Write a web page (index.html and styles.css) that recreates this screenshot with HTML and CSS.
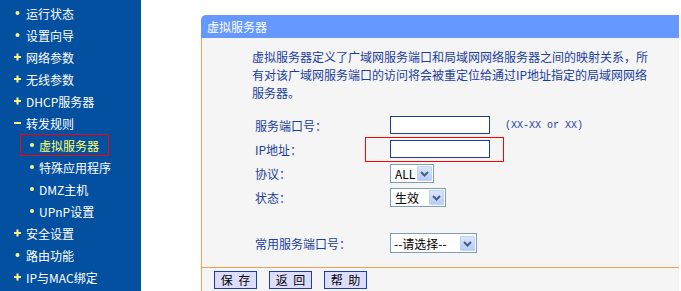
FILE: index.html
```html
<html>
<head>
    <title>虚拟服务器</title>
    <link rel="stylesheet" href="styles.css">
</head>
<body>
<div class="page">
    <aside class="side-menu">
        <ul class="menu-list">
            <li class="menu-item"><svg class="mark" width="8" height="8"><circle cx="3.5" cy="4" r="2" fill="#ffff80"/></svg>运行状态</li>
            <li class="menu-item"><svg class="mark" width="8" height="8"><circle cx="3.5" cy="4" r="2" fill="#ffff80"/></svg>设置向导</li>
            <li class="menu-item"><svg class="mark" width="8" height="8"><path d="M0 3h7v2H0zM2.5 0.5h2v7h-2z" fill="#ffff80"/></svg>网络参数</li>
            <li class="menu-item"><svg class="mark" width="8" height="8"><path d="M0 3h7v2H0zM2.5 0.5h2v7h-2z" fill="#ffff80"/></svg>无线参数</li>
            <li class="menu-item"><svg class="mark" width="8" height="8"><path d="M0 3h7v2H0zM2.5 0.5h2v7h-2z" fill="#ffff80"/></svg>DHCP服务器</li>
            <li class="menu-item"><svg class="mark" width="8" height="8"><path d="M0 3h7v2H0z" fill="#ffff80"/></svg>转发规则</li>
            <li class="menu-item menu-sub menu-active"><svg class="mark" width="8" height="8"><circle cx="4" cy="4" r="2" fill="#ffff80"/></svg>虚拟服务器</li>
            <li class="menu-item menu-sub"><svg class="mark" width="8" height="8"><circle cx="4" cy="4" r="2" fill="#ffff80"/></svg>特殊应用程序</li>
            <li class="menu-item menu-sub"><svg class="mark" width="8" height="8"><circle cx="4" cy="4" r="2" fill="#ffff80"/></svg>DMZ主机</li>
            <li class="menu-item menu-sub"><svg class="mark" width="8" height="8"><circle cx="4" cy="4" r="2" fill="#ffff80"/></svg>UPnP设置</li>
            <li class="menu-item"><svg class="mark" width="8" height="8"><path d="M0 3h7v2H0zM2.5 0.5h2v7h-2z" fill="#ffff80"/></svg>安全设置</li>
            <li class="menu-item"><svg class="mark" width="8" height="8"><circle cx="3.5" cy="4" r="2" fill="#ffff80"/></svg>路由功能</li>
            <li class="menu-item"><svg class="mark" width="8" height="8"><path d="M0 3h7v2H0zM2.5 0.5h2v7h-2z" fill="#ffff80"/></svg>IP与MAC绑定</li>
        </ul>
    </aside>
    <main class="content">
        <section class="panel">
            <div class="panel-head">虚拟服务器</div>
            <div class="panel-body">
                <p class="panel-desc">虚拟服务器定义了广域网服务端口和局域网网络服务器之间的映射关系，所有对该广域网服务端口的访问将会被重定位给通过IP地址指定的局域网网络服务器。</p>
                <form class="vs-form">
                    <div class="form-row">
                        <label class="form-label">服务端口号：</label>
                        <input type="text" class="text-input">
                        <span class="form-hint">(XX-XX or XX)</span>
                    </div>
                    <div class="form-row">
                        <label class="form-label">IP地址：</label>
                        <input type="text" class="text-input">
                        <div class="mark-box"></div>
                    </div>
                    <div class="form-row">
                        <label class="form-label">协议：</label>
                        <div class="select select-proto">
                            <span class="select-text">ALL</span>
                            <span class="select-btn"><svg width="13" height="13"><path d="M3 5l3.5 3.5L10 5" stroke="#4a5d80" stroke-width="2" fill="none"/></svg></span>
                        </div>
                    </div>
                    <div class="form-row">
                        <label class="form-label">状态：</label>
                        <div class="select select-state">
                            <span class="select-text">生效</span>
                            <span class="select-btn"><svg width="13" height="13"><path d="M3 5l3.5 3.5L10 5" stroke="#4a5d80" stroke-width="2" fill="none"/></svg></span>
                        </div>
                    </div>
                    <div class="form-row form-row-spaced">
                        <label class="form-label">常用服务端口号：</label>
                        <div class="select select-common">
                            <span class="select-text">--请选择--</span>
                            <span class="select-btn"><svg width="13" height="13"><path d="M3 5l3.5 3.5L10 5" stroke="#4a5d80" stroke-width="2" fill="none"/></svg></span>
                        </div>
                    </div>
                </form>
            </div>
            <div class="panel-foot">
                <button class="btn">保 存</button>
                <button class="btn">返 回</button>
                <button class="btn">帮 助</button>
            </div>
        </section>
    </main>
</div>
</body>
</html>
```

FILE: styles.css
```css
body {
    margin: 0;
    font-family: "Noto Sans CJK SC", sans-serif;
    font-size: 12px;
}

.page {
    display: flex;
    height: 291px;
    overflow: hidden;
}

.side-menu {
    width: 141px;
    flex-shrink: 0;
    background-color: #0450a0;
    padding-top: 2px;
}

.menu-list {
    margin: 0;
    padding: 0;
    list-style: none;
}

.menu-item {
    height: 22px;
    display: flex;
    align-items: center;
    padding-left: 14px;
    color: #fff;
    box-sizing: border-box;
    white-space: nowrap;
}

.mark {
    margin-right: 4px;
    flex-shrink: 0;
}

.menu-sub {
    padding-left: 28px;
}

.menu-sub .mark {
    margin-right: 3px;
}

.menu-active {
    margin-left: 20px;
    width: 89px;
    padding-left: 7px;
    border: 1px solid #ff0000;
    color: #ffff66;
}

.content {
    flex: 1;
    background-color: #fff;
    padding: 15px 2px 0 60px;
}

.panel {
    display: flex;
    flex-direction: column;
    height: 100%;
}

.panel-head {
    height: 23px;
    line-height: 23px;
    padding-left: 6px;
    background-color: #6699ff;
    color: #fff;
    border-top-left-radius: 5px;
}

.panel-body {
    height: 230px;
    box-sizing: border-box;
    padding: 10px 0 0 50px;
    background-color: #f5f5f5;
    border-left: 1px solid #f2a050;
    border-bottom: 1px solid #f2a050;
}

.panel-desc {
    width: 396px;
    margin: 0;
    line-height: 18px;
    color: #1a3d9e;
}

.vs-form {
    margin: 11px 0 0 3px;
}

.form-row {
    height: 24px;
    display: flex;
    align-items: center;
    position: relative;
}

.form-row-spaced {
    margin-top: 22px;
}

.form-label {
    width: 135px;
    color: #1a3d9e;
}

.text-input {
    width: 100px;
    height: 18px;
    box-sizing: border-box;
    border: 1px solid #1c3c9c;
    background-color: #fff;
    padding: 0 2px;
    margin: 0;
    outline: none;
}

.form-hint {
    margin-left: 15px;
    font-family: "Liberation Mono", monospace;
    font-size: 10px;
    color: #1a3d9e;
}

.mark-box {
    position: absolute;
    left: 110px;
    top: 0;
    width: 139px;
    height: 25px;
    box-sizing: border-box;
    border: 1px solid red;
    pointer-events: none;
}

.select {
    height: 19px;
    box-sizing: border-box;
    display: flex;
    align-items: center;
    justify-content: space-between;
    border: 1px solid #7f9db9;
    background-color: #fff;
    padding: 0 1px 0 4px;
    color: #000;
}

.select-proto {
    width: 44px;
}

.select-state {
    width: 56px;
}

.select-common {
    width: 87px;
    height: 20px;
    padding-left: 3px;
}

.select-text {
    white-space: nowrap;
}

.select-btn {
    width: 15px;
    height: 15px;
    box-sizing: border-box;
    display: flex;
    align-items: center;
    justify-content: center;
    background: linear-gradient(#dbe6fe, #b7cbf8);
    border: 1px solid #c0d2fa;
    border-radius: 1px;
}

.panel-foot {
    flex: 1;
    display: flex;
    align-items: flex-start;
    gap: 12px;
    padding: 3px 0 0 12px;
    background-color: #f5f5f5;
    border-left: 1px solid #f2a050;
}

.btn {
    width: 43px;
    height: 18px;
    padding: 0;
    margin: 0;
    box-sizing: border-box;
    border: 1px solid #1c3fa4;
    background-color: #dcdcfc;
    font-family: "Noto Sans CJK SC", sans-serif;
    font-size: 12px;
    line-height: 16px;
    word-spacing: 3px;
    color: #000;
}
```
